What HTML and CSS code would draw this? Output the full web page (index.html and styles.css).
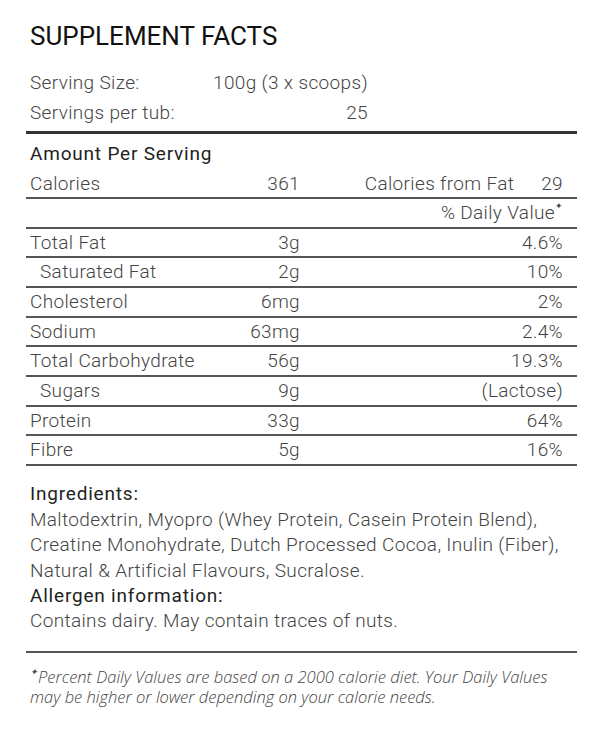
FILE: index.html
```html
<!DOCTYPE html>
<html>
<head>
<meta charset="utf-8">
<link rel="stylesheet" href="styles.css">
</head>
<body>
<div class="label">
  <h1 class="title">SUPPLEMENT FACTS</h1>
  <div class="serving">
    <div class="srow"><span>Serving Size:</span><span class="sval">100g (3 x scoops)</span></div>
    <div class="srow"><span>Servings per tub:</span><span class="sval">25</span></div>
  </div>
  <div class="facts">
    <div class="amount">Amount Per Serving</div>
    <div class="row"><span>Calories</span><span class="v">361</span><span class="dv"><span class="cff">Calories from Fat</span>29</span></div>
    <div class="row"><span></span><span class="v"></span><span class="dv">% Daily Value<sup class="star">✦</sup></span></div>
    <div class="row"><span>Total Fat</span><span class="v">3g</span><span class="dv">4.6%</span></div>
    <div class="row"><span class="ind">Saturated Fat</span><span class="v">2g</span><span class="dv">10%</span></div>
    <div class="row"><span>Cholesterol</span><span class="v">6mg</span><span class="dv">2%</span></div>
    <div class="row"><span>Sodium</span><span class="v">63mg</span><span class="dv">2.4%</span></div>
    <div class="row"><span>Total Carbohydrate</span><span class="v">56g</span><span class="dv">19.3%</span></div>
    <div class="row"><span class="ind">Sugars</span><span class="v">9g</span><span class="dv">(Lactose)</span></div>
    <div class="row"><span>Protein</span><span class="v">33g</span><span class="dv">64%</span></div>
    <div class="row"><span>Fibre</span><span class="v">5g</span><span class="dv">16%</span></div>
  </div>
  <div class="ingredients">
    <div class="head">Ingredients:</div>
    <div>Maltodextrin, Myopro (Whey Protein, Casein Protein Blend),<br>Creatine Monohydrate, Dutch Processed Cocoa, Inulin (Fiber),<br>Natural &amp; Artificial Flavours, Sucralose.</div>
    <div class="head">Allergen information:</div>
    <div>Contains dairy. May contain traces of nuts.</div>
  </div>
  <p class="note"><sup class="star">✦</sup>Percent Daily Values are based on a 2000 calorie diet. Your Daily Values<br>may be higher or lower depending on your calorie needs.</p>
</div>
</body>
</html>
```

FILE: styles.css
```css
html, body {
  margin: 0;
  padding: 0;
  background: #fff;
}
body {
  font-family: Roboto, "Liberation Sans", sans-serif;
  color: #444;
  width: 600px;
  height: 740px;
}
.label {
  margin-left: 26px;
  width: 551px;
}
.title {
  margin: 0;
  padding: 21px 0 0 4px;
  font-size: 26px;
  line-height: 30px;
  font-weight: 400;
  color: #111;
  letter-spacing: 0px;
}
.serving {
  padding: 16.5px 0 3px 4px;
  border-bottom: 3px solid #333;
}
.srow {
  display: grid;
  grid-template-columns: 180px 158px;
  font-size: 19px;
  line-height: 30px;
  font-weight: 300;
  letter-spacing: 0.35px;
}
.sval { text-align: right; }
.amount {
  padding: 9px 0 0 4px;
  margin-bottom: 5px;
  font-size: 19px;
  line-height: 22px;
  font-weight: 400;
  color: #222;
  letter-spacing: 0.8px;
}
.row {
  display: grid;
  grid-template-columns: 200px 70px 1fr;
  padding: 0 14px 0 4px;
  height: 27.67px;
  line-height: 27.67px;
  font-size: 19px;
  font-weight: 300;
  letter-spacing: 0.35px;
  border-bottom: 2px solid #555;
}
.row .v { text-align: right; }
.row .dv { text-align: right; white-space: nowrap; }
.cff { margin-right: 27px; }
.ind { padding-left: 10px; }
.star {
  font-size: 9px;
  vertical-align: top;
  line-height: 1;
  position: relative;
  top: 3px;
  letter-spacing: 0;
}
.ingredients {
  padding: 15.4px 0 16.8px 4px;
  font-size: 19px;
  line-height: 25.4px;
  font-weight: 300;
  letter-spacing: 0.35px;
  border-bottom: 2px solid #555;
}
.ingredients .head {
  font-weight: 400;
  color: #222;
  letter-spacing: 0.8px;
}
.note {
  margin: 0;
  padding: 14.5px 0 0 4px;
  font-family: "Open Sans", sans-serif;
  font-style: italic;
  font-size: 16.5px;
  line-height: 20px;
  font-weight: 300;
  color: #444;
  white-space: nowrap;
}
.note .star {
  top: 0;
}
```
